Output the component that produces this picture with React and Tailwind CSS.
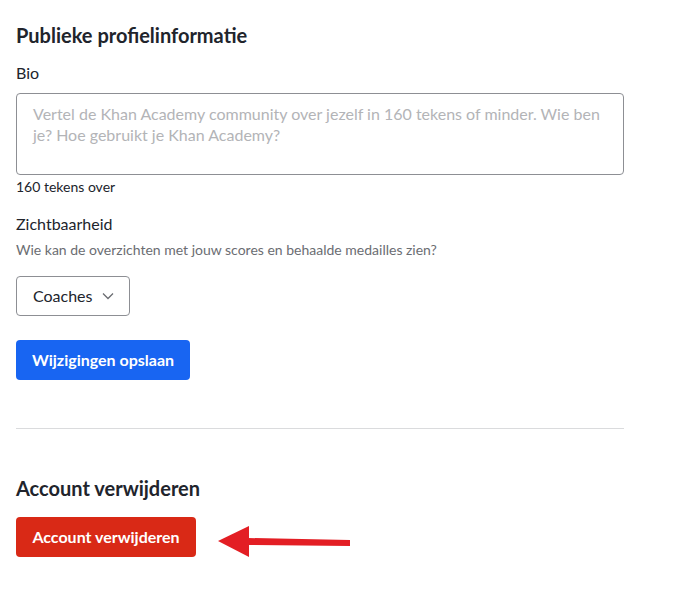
import React from "react";

export default function App() {
  return (
    <div className="min-h-[598px] w-[697px] bg-white text-[#21242c]" style={{ fontFamily: "Lato, 'Noto Sans', sans-serif" }}>
      <div className="w-[624px] pl-4 pt-[23px]">
        <h2 className="text-[20px] font-bold leading-6">Publieke profielinformatie</h2>
        <div className="mt-4 text-[16px] leading-5">Bio</div>
        <textarea
          className="mt-[10px] block h-[82px] w-full resize-none rounded-[4px] border border-[#8d8f94] px-4 py-[9px] text-[16px] leading-[21px] outline-none placeholder:text-[#b3b4b7]"
          placeholder="Vertel de Khan Academy community over jezelf in 160 tekens of minder. Wie ben je? Hoe gebruikt je Khan Academy?"
        />
        <div className="mt-[3px] text-[14px] leading-[18px]">160 tekens over</div>
        <div className="mt-[18px] text-[16px] leading-5">Zichtbaarheid</div>
        <div className="mt-[7px] text-[14px] leading-[18px] text-[#6b6d72]">
          Wie kan de overzichten met jouw scores en behaalde medailles zien?
        </div>
        <button className="mt-[17px] flex h-10 w-[114px] items-center rounded-[4px] border border-[#8d8f94] bg-white pl-4 text-[16px]">
          <span>Coaches</span>
          <svg className="ml-[9px]" width="12" height="8" viewBox="0 0 12 8" fill="none">
            <path d="M1 1.5L6 6.5L11 1.5" stroke="#6b6d72" strokeWidth="1.3" />
          </svg>
        </button>
        <button className="mt-6 flex h-10 w-[174px] items-center justify-center rounded-[4px] bg-[#1865f2] text-[16px] font-bold text-white">
          Wijzigingen opslaan
        </button>
        <div className="mt-12 h-px w-full bg-[#dadbdd]" />
        <h2 className="mt-[47px] text-[20px] font-bold leading-6">Account verwijderen</h2>
        <div className="relative mt-[17px]">
          <button className="flex h-10 w-[180px] items-center justify-center rounded-[4px] bg-[#d92916] text-[16px] font-bold text-white">
            Account verwijderen
          </button>
          <svg className="absolute left-[202px] top-[9px]" width="132" height="32" viewBox="0 0 132 32" fill="none">
            <polygon points="0,15 31,0 31,31" fill="#e31e24" />
            <polygon points="30,12 132,14 132,20 30,19" fill="#e31e24" />
          </svg>
        </div>
      </div>
    </div>
  );
}
